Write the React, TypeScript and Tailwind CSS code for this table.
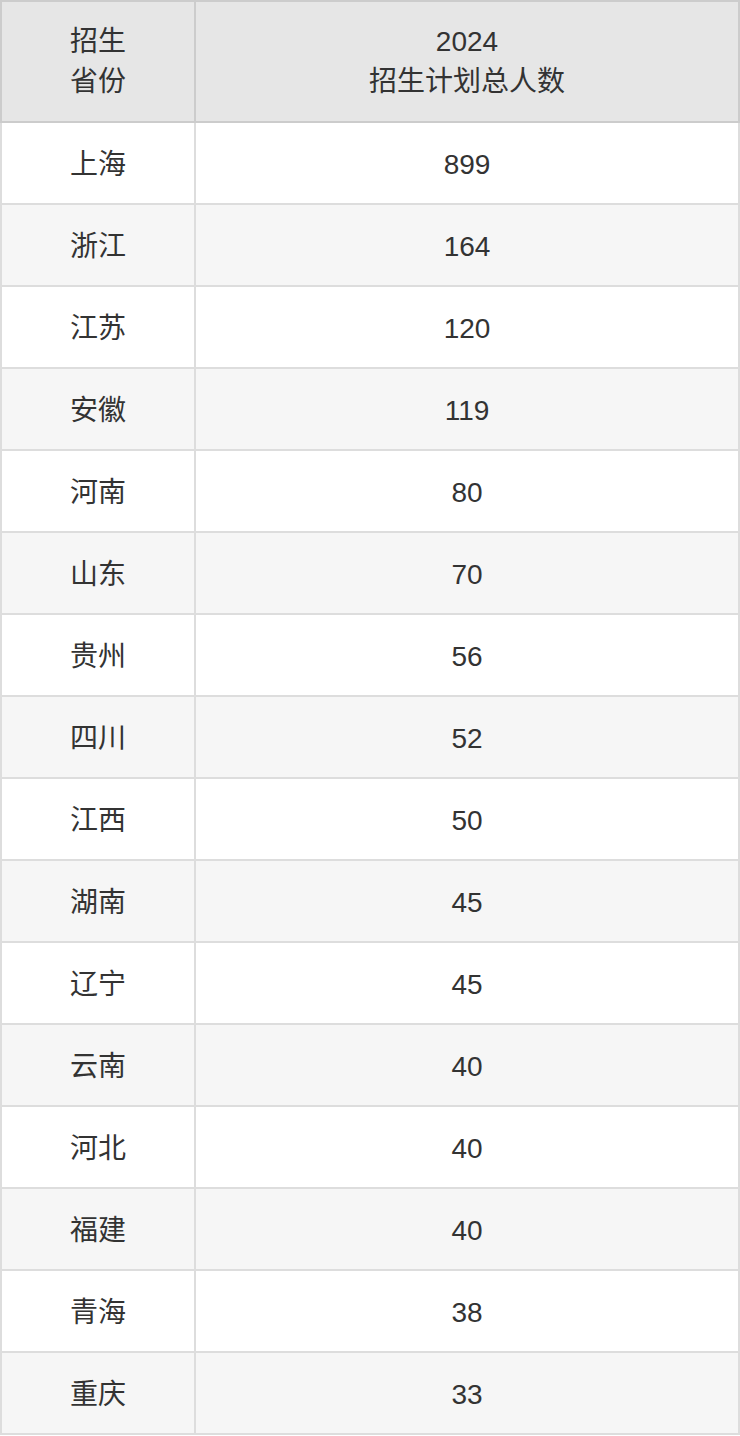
const rows: [string, number][] = [
  ['上海', 899],
  ['浙江', 164],
  ['江苏', 120],
  ['安徽', 119],
  ['河南', 80],
  ['山东', 70],
  ['贵州', 56],
  ['四川', 52],
  ['江西', 50],
  ['湖南', 45],
  ['辽宁', 45],
  ['云南', 40],
  ['河北', 40],
  ['福建', 40],
  ['青海', 38],
  ['重庆', 33],
]

export default function App() {
  return (
    <div
      className="w-[740px] bg-white text-[28px] leading-[40px] text-[#333]"
      style={{ fontFamily: '"Liberation Sans", "Noto Sans CJK SC", sans-serif' }}
    >
      {/* header */}
      <div className="flex border-t-2 border-l-2 border-[#cccccc] bg-[#e6e6e6]">
        <div className="flex h-[121px] w-[194px] flex-col items-center justify-center border-r-2 border-b-2 border-[#cccccc] text-center">
          <span>招生</span>
          <span>省份</span>
        </div>
        <div className="flex h-[121px] flex-1 flex-col items-center justify-center border-r-2 border-b-2 border-[#cccccc] text-center">
          <span>2024</span>
          <span>招生计划总人数</span>
        </div>
      </div>
      {rows.map(([name, n], i) => (
        <div
          key={name + i}
          className={`flex border-l-2 border-[#dddddd] ${i % 2 === 1 ? 'bg-[#f6f6f6]' : 'bg-white'}`}
        >
          <div className="flex h-[82px] w-[194px] items-center justify-center border-r-2 border-b-2 border-[#dddddd] pt-[4px]">
            {name}
          </div>
          <div className="flex h-[82px] flex-1 items-center justify-center border-r-2 border-b-2 border-[#dddddd] pt-[4px]">
            {n}
          </div>
        </div>
      ))}
    </div>
  )
}
